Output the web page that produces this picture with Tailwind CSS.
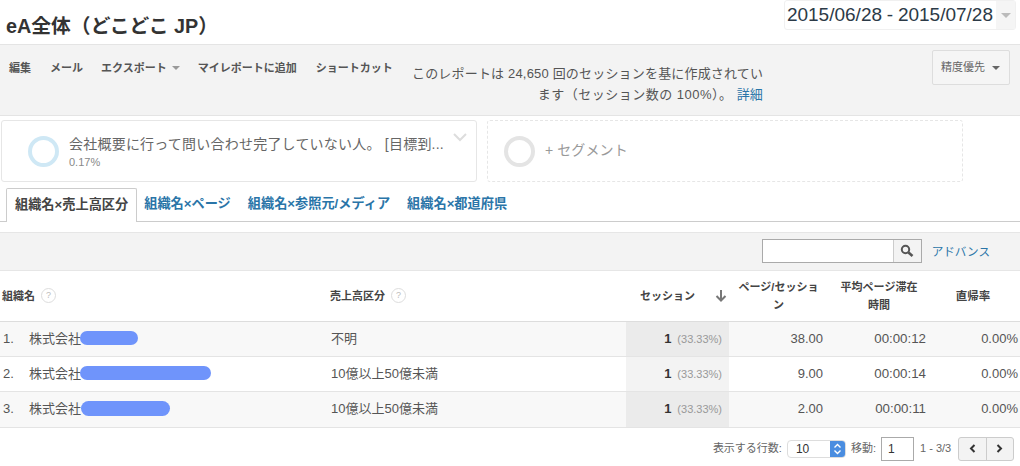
<!DOCTYPE html>
<html lang="ja">
<head>
<meta charset="UTF-8">
<title>eA全体</title>
<script src="https://cdn.jsdelivr.net/npm/@tailwindcss/browser@4"></script>
</head>
<body class="bg-white font-['Liberation_Sans','Noto_Sans_CJK_JP',sans-serif] text-[#444] w-[1020px] h-[466px] overflow-hidden">
  <!-- Title -->
  <header class="h-[44px] flex justify-between pl-[6px] pr-[4px]">
    <h1 class="text-[19.8px] leading-[24px] pt-[14px] font-bold text-[#333]">eA全体（どこどこ JP）</h1>
    <div class="flex h-[30px] rounded-[3px] border border-[#f0f0f0]">
      <span class="text-[19px] leading-[28px] text-[#2c3a47] pl-[2px] pr-[3px] [word-spacing:-0.5px]">2015/06/28 - 2015/07/28</span>
      <span class="w-[19px] bg-[#f5f5f5] flex items-center justify-center">
        <span class="w-0 h-0 border-x-[5px] border-x-transparent border-t-[5px] border-t-[#bbb]"></span>
      </span>
    </div>
  </header>

  <!-- Toolbar -->
  <section class="h-[72px] bg-[#f3f3f3] border-y border-[#e4e4e4] flex relative">
    <nav class="flex gap-[19px] pl-[9px] pt-[15px] text-[11px] leading-[16px] font-bold text-[#555] w-[412px] shrink-0 whitespace-nowrap items-start">
      <span>編集</span><span>メール</span>
      <span class="flex items-center gap-[5px] -ml-px">エクスポート<span class="w-0 h-0 border-x-[4px] border-x-transparent border-t-[4px] border-t-[#999]"></span></span>
      <span class="-ml-px">マイレポートに追加</span><span>ショートカット</span>
    </nav>
    <p class="w-[351px] mt-[18px] text-[13px] leading-[21px] text-[#555] text-right tracking-[0.18px] whitespace-nowrap">このレポートは 24,650 回のセッションを基に作成されてい<br><span class="tracking-[0.5px]">ます（セッション数の 100%）。 </span><span class="text-[#2a75a8]">詳細</span></p>
    <div class="ml-auto mr-[10px] mt-[5px] w-[78px] h-[35px] border border-[#ddd] rounded-[2px] bg-[#f5f5f5] flex items-center justify-between pl-[8px] pr-[9px] text-[11px] text-[#666]">
      精度優先<span class="w-0 h-0 border-x-[4px] border-x-transparent border-t-[4px] border-t-[#666]"></span>
    </div>
  </section>

  <!-- Segments -->
  <section class="flex gap-[10px] pl-px pt-[4px] h-[66px]">
    <div class="w-[476px] h-[62px] border border-[#e6e6e6] rounded-[3px] flex items-center pl-[26px] relative">
      <span class="w-[31px] h-[31px] rounded-full border-[4px] border-[#cfe8f5] shrink-0"></span>
      <div class="ml-[10px]">
        <div class="text-[14px] leading-[20px] text-[#666] tracking-[0.22px]">会社概要に行って問い合わせ完了していない人。 [目標到...</div>
        <div class="text-[11px] leading-[14px] text-[#888] mt-[1px]">0.17%</div>
      </div>
      <svg class="absolute right-[8px] top-[12px]" width="16" height="9" viewBox="0 0 16 9" fill="none" stroke="#ddd" stroke-width="2"><path d="M2 1l6 6 6-6"/></svg>
    </div>
    <div class="w-[476px] h-[62px] border border-dashed border-[#e6e6e6] rounded-[3px] flex items-center pl-[16px]">
      <span class="w-[31px] h-[31px] rounded-full border-[4px] border-[#e4e4e4] shrink-0"></span>
      <span class="ml-[10px] text-[14px] leading-[20px] text-[#999] -mt-[2px] tracking-[0.1px]">+ セグメント</span>
    </div>
  </section>

  <!-- Tabs -->
  <nav class="h-[40px] pl-[6px] flex items-end border-b border-[#ccc] text-[13.2px] font-bold text-[#2a75a8] whitespace-nowrap">
    <span class="h-[34px] -mb-px px-[8px] border border-b-0 border-[#ccc] bg-white text-[#444] leading-[32px] rounded-t-[2px]">組織名×売上高区分</span>
    <span class="h-[33px] leading-[31px] ml-[7px]">組織名×ページ</span>
    <span class="h-[33px] leading-[31px] ml-[17px]">組織名×参照元/メディア</span>
    <span class="h-[33px] leading-[31px] ml-[17px]">組織名×都道府県</span>
  </nav>

  <!-- Filter bar -->
  <section class="mt-[10px] h-[39px] bg-[#f3f3f3] border-y border-[#e6e6e6] flex items-center justify-end pr-[30px]">
    <div class="flex w-[160px] h-[24px] border border-[#aaa] bg-white -mt-[1px]">
      <span class="flex-1"></span>
      <span class="w-[28px] border-l border-[#ccc] bg-[#f3f3f3] flex items-center justify-center">
        <svg width="14" height="14" viewBox="0 0 14 14" fill="none" stroke="#555"><circle cx="5.5" cy="5.5" r="3.7" stroke-width="2"/><path d="M8.5 8.5l4 3.5" stroke-width="2.6"/></svg>
      </span>
    </div>
    <span class="ml-[10px] text-[11.6px] text-[#2a75a8]">アドバンス</span>
  </section>

  <!-- Table -->
  <table class="w-[1020px] table-fixed border-collapse text-[13px]">
    <colgroup><col class="w-[330px]"><col class="w-[296px]"><col class="w-[103px]"><col class="w-[101px]"><col class="w-[103px]"><col class="w-[87px]"></colgroup>
    <thead>
      <tr class="h-[50px] border-b border-[#ddd] text-[11px] leading-[18px] font-bold text-[#444]">
        <th class="text-left pl-[2px] font-bold"><span class="flex items-center gap-[6px]">組織名<span class="w-[15px] h-[15px] rounded-full border border-[#ddd] text-[9px] leading-[13px] text-center text-[#bbb] font-normal">?</span></span></th>
        <th class="text-left font-bold"><span class="flex items-center gap-[6px]">売上高区分<span class="w-[15px] h-[15px] rounded-full border border-[#ddd] text-[9px] leading-[13px] text-center text-[#bbb] font-normal">?</span></span></th>
        <th class="font-bold pl-[14px]">
          <span class="flex items-center justify-between pr-[2px]">セッション
            <svg width="12" height="12" viewBox="0 0 12 12" fill="none" stroke="#777" stroke-width="2"><path d="M6 0v10M1.5 6L6 10.5 10.5 6"/></svg>
          </span>
        </th>
        <th class="font-bold pr-[2px]">ページ/セッショ<br>ン</th>
        <th class="font-bold pr-[5px]">平均ページ滞在<br>時間</th>
        <th class="font-bold pr-[7px] text-[11.5px]">直帰率</th>
      </tr>
    </thead>
    <tbody class="text-[#555]">
      <tr class="h-[35px] bg-[#f8f8f8] border-b border-[#e4e4e4]">
        <td class="pl-[3px]"><span class="flex items-center"><span class="w-[26px]">1.</span>株式会社<span class="-ml-px w-[58px] h-[14px] rounded-full bg-[#6f94fb] -mt-[2px]"></span></span></td>
        <td class="pl-px">不明</td>
        <td class="bg-[#ebebeb] text-right pr-[7px]"><b class="text-[#333]">1</b><span class="ml-[6px] text-[11px] text-[#999]">(33.33%)</span></td>
        <td class="text-right pr-[7px]">38.00</td>
        <td class="text-right pr-[7px] text-[13.3px]">00:00:12</td>
        <td class="text-right pr-[2px]">0.00%</td>
      </tr>
      <tr class="h-[35px] border-b border-[#e4e4e4]">
        <td class="pl-[3px]"><span class="flex items-center"><span class="w-[26px]">2.</span>株式会社<span class="-ml-px w-[131px] h-[14px] rounded-full bg-[#6f94fb] -mt-[2px]"></span></span></td>
        <td class="pl-px">10億以上50億未満</td>
        <td class="bg-[#f3f3f3] text-right pr-[7px]"><b class="text-[#333]">1</b><span class="ml-[6px] text-[11px] text-[#999]">(33.33%)</span></td>
        <td class="text-right pr-[7px]">9.00</td>
        <td class="text-right pr-[7px] text-[13.3px]">00:00:14</td>
        <td class="text-right pr-[2px]">0.00%</td>
      </tr>
      <tr class="h-[36px] bg-[#f8f8f8] border-b border-[#e4e4e4]">
        <td class="pl-[3px]"><span class="flex items-center"><span class="w-[26px]">3.</span>株式会社<span class="w-[89px] h-[15px] rounded-full bg-[#6f94fb] -mt-[2px]"></span></span></td>
        <td class="pl-px">10億以上50億未満</td>
        <td class="bg-[#ebebeb] text-right pr-[7px]"><b class="text-[#333]">1</b><span class="ml-[6px] text-[11px] text-[#999]">(33.33%)</span></td>
        <td class="text-right pr-[7px]">2.00</td>
        <td class="text-right pr-[7px] text-[13.3px]">00:00:11</td>
        <td class="text-right pr-[2px]">0.00%</td>
      </tr>
    </tbody>
  </table>

  <!-- Pager -->
  <footer class="flex items-center justify-end pt-[9px] pr-[6px] text-[11px] text-[#666] whitespace-nowrap">
    <span>表示する行数:</span>
    <span class="ml-[5px] w-[59px] h-[18px] flex justify-between rounded-[4px] border border-[#ddd] bg-white text-[12px] leading-[17px] text-[#333] pl-[8px] overflow-hidden">10
      <span class="w-[15px] bg-[#4a8de0] flex items-center justify-center">
        <svg width="9" height="12" viewBox="0 0 9 12" fill="none" stroke="#fff" stroke-width="1.4"><path d="M1.5 4.5L4.5 1.5l3 3M1.5 7.5l3 3 3-3"/></svg>
      </span>
    </span>
    <span class="ml-[5px]">移動:</span>
    <span class="ml-[5px] w-[33px] h-[24px] border border-[#aaa] bg-white text-[12px] leading-[23px] text-[#333] pl-[6px]">1</span>
    <span class="ml-[6px] w-[30px]">1 - 3/3</span>
    <span class="ml-[8px] w-[56px] h-[24px] flex border border-[#ccc] rounded-[3px] bg-[#f3f3f3]">
      <span class="flex-1 flex items-center justify-center border-r border-[#ccc]"><svg width="7" height="9" viewBox="0 0 7 9" fill="none" stroke="#333" stroke-width="2"><path d="M5.5 1L2 4.5 5.5 8"/></svg></span>
      <span class="flex-1 flex items-center justify-center"><svg width="7" height="9" viewBox="0 0 7 9" fill="none" stroke="#333" stroke-width="2"><path d="M1.5 1L5 4.5 1.5 8"/></svg></span>
    </span>
  </footer>
</body>
</html>
